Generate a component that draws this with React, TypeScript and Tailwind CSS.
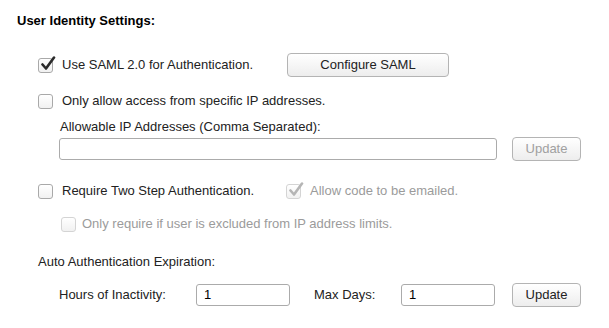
import { ReactNode } from "react";

const Box = ({ checked, disabled }: { checked?: boolean; disabled?: boolean }) => (
  <span
    className={`relative inline-block w-[15px] h-[15px] shrink-0 rounded-[3px] border bg-gradient-to-b from-white to-[#f1f1f1] ${
      disabled ? "border-[#d4d4d4]" : "border-[#a9a9a9]"
    }`}
  >
    {checked && (
      <svg
        viewBox="0 0 16 16"
        className="absolute left-[1px] -top-[3px] w-[16px] h-[16px]"
      >
        <path
          d="M2.5 8.5 L6 12.5 L14 1.5"
          fill="none"
          stroke={disabled ? "#b5b5b5" : "#2b2b2b"}
          strokeWidth="2.6"
          strokeLinecap="round"
          strokeLinejoin="round"
        />
      </svg>
    )}
  </span>
);

const Btn = ({ children, disabled, w }: { children: ReactNode; disabled?: boolean; w: string }) => (
  <button
    className={`${w} h-[24px] rounded-[4px] border border-[#b4b4b4] bg-gradient-to-b from-white to-[#ededed] text-[13px] ${
      disabled ? "text-[#a0a0a0]" : "text-[#222]"
    }`}
  >
    {children}
  </button>
);

const Field = ({ w, value }: { w: string; value?: string }) => (
  <div className={`${w} h-[22px] rounded-[3px] border border-[#ababab] bg-white pl-[7px] text-[13px] leading-[20px] text-black`}>
    {value}
  </div>
);

export default function App() {
  return (
    <div
      className="w-[609px] h-[328px] bg-white text-[#222] text-[13px] pl-[17px] pt-[13px]"
      style={{ fontFamily: '"Liberation Sans", Arial, sans-serif' }}
    >
      <div className="h-4 leading-4 font-bold text-[13px] text-black">User Identity Settings:</div>

      {/* SAML */}
      <div className="mt-[24px] ml-[21px] h-[24px] flex items-center">
        <Box checked />
        <span className="ml-[9px] w-[225px] whitespace-nowrap">Use SAML 2.0 for Authentication.</span>
        <Btn w="w-[162px]">Configure SAML</Btn>
      </div>

      {/* IP restriction */}
      <div className="mt-[16px] ml-[21px] h-4 flex items-center">
        <Box />
        <span className="ml-[9px]">Only allow access from specific IP addresses.</span>
      </div>
      <div className="mt-[10px] ml-[43px] h-4 leading-4">Allowable IP Addresses (Comma Separated):</div>
      <div className="mt-[2px] ml-[42px] h-[24px] flex items-center gap-[15px]">
        <Field w="w-[438px]" />
        <Btn w="w-[69px]" disabled>
          Update
        </Btn>
      </div>

      {/* Two step */}
      <div className="mt-[22px] ml-[21px] h-4 flex items-center">
        <Box />
        <span className="ml-[9px] w-[224px] whitespace-nowrap">Require Two Step Authentication.</span>
        <Box checked disabled />
        <span className="ml-[9px] text-[#9b9b9b]">Allow code to be emailed.</span>
      </div>
      <div className="mt-[17px] ml-[44px] h-4 flex items-center">
        <Box disabled />
        <span className="ml-[6px] text-[#9b9b9b]">Only require if user is excluded from IP address limits.</span>
      </div>

      {/* Expiration */}
      <div className="mt-[22px] ml-[21px] h-4 leading-4">Auto Authentication Expiration:</div>
      <div className="mt-[13px] ml-[42px] h-[24px] flex items-center">
        <span className="w-[137px]">Hours of Inactivity:</span>
        <Field w="w-[94px]" value="1" />
        <span className="ml-[24px] w-[87px]">Max Days:</span>
        <Field w="w-[94px]" value="1" />
        <div className="ml-[17px]">
          <Btn w="w-[69px]">Update</Btn>
        </div>
      </div>
    </div>
  );
}
